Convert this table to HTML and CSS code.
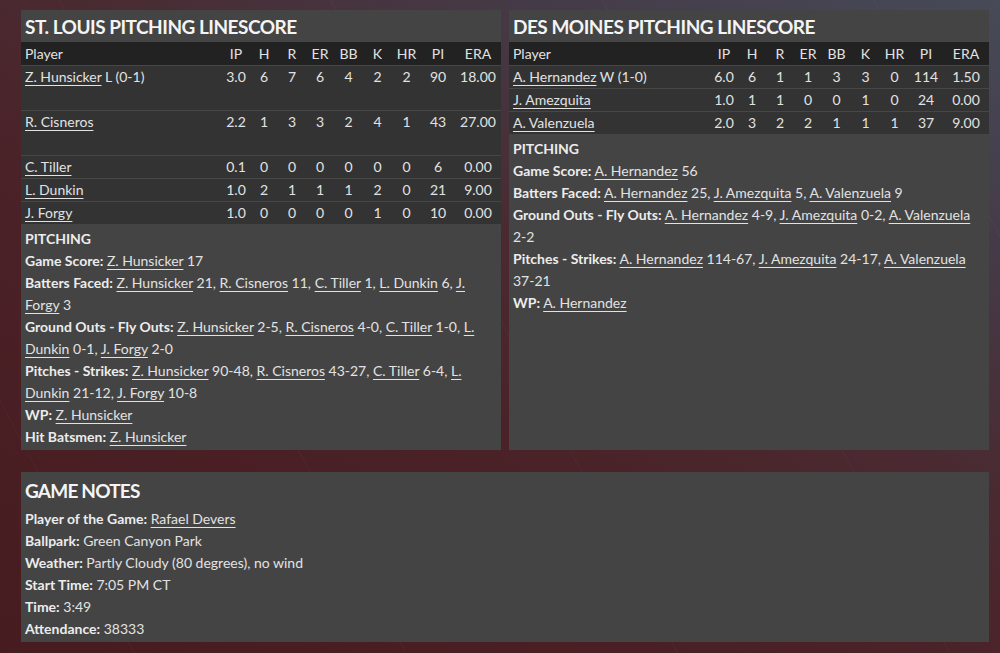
FILE: index.html
```html
<!DOCTYPE html>
<html>
<head>
<meta charset="utf-8">
<link rel="stylesheet" href="styles.css">
</head>
<body>
<div class="page">
  <div class="top">
    <section class="panel">
      <h2 class="panel-title">ST. LOUIS PITCHING LINESCORE</h2>
      <table class="line">
        <colgroup><col><col class="c-ip"><col class="c-n"><col class="c-n"><col class="c-n"><col class="c-n2"><col class="c-n2"><col class="c-n2"><col class="c-pi"><col class="c-era"></colgroup>
        <thead><tr><th class="name">Player</th><th>IP</th><th>H</th><th>R</th><th>ER</th><th>BB</th><th>K</th><th>HR</th><th>PI</th><th>ERA</th></tr></thead>
        <tbody>
          <tr class="tall"><td class="name"><a href="#">Z. Hunsicker</a> L (0-1)</td><td>3.0</td><td>6</td><td>7</td><td>6</td><td>4</td><td>2</td><td>2</td><td>90</td><td>18.00</td></tr>
          <tr class="tall"><td class="name"><a href="#">R. Cisneros</a></td><td>2.2</td><td>1</td><td>3</td><td>3</td><td>2</td><td>4</td><td>1</td><td>43</td><td>27.00</td></tr>
          <tr><td class="name"><a href="#">C. Tiller</a></td><td>0.1</td><td>0</td><td>0</td><td>0</td><td>0</td><td>0</td><td>0</td><td>6</td><td>0.00</td></tr>
          <tr><td class="name"><a href="#">L. Dunkin</a></td><td>1.0</td><td>2</td><td>1</td><td>1</td><td>1</td><td>2</td><td>0</td><td>21</td><td>9.00</td></tr>
          <tr><td class="name"><a href="#">J. Forgy</a></td><td>1.0</td><td>0</td><td>0</td><td>0</td><td>0</td><td>1</td><td>0</td><td>10</td><td>0.00</td></tr>
        </tbody>
      </table>
      <div class="notes">
        <p><b>PITCHING</b></p>
        <p><b>Game Score:</b> <a href="#">Z. Hunsicker</a> 17</p>
        <p><b>Batters Faced:</b> <a href="#">Z. Hunsicker</a> 21, <a href="#">R. Cisneros</a> 11, <a href="#">C. Tiller</a> 1, <a href="#">L. Dunkin</a> 6, <a href="#">J. Forgy</a> 3</p>
        <p><b>Ground Outs - Fly Outs:</b> <a href="#">Z. Hunsicker</a> 2-5, <a href="#">R. Cisneros</a> 4-0, <a href="#">C. Tiller</a> 1-0, <a href="#">L. Dunkin</a> 0-1, <a href="#">J. Forgy</a> 2-0</p>
        <p><b>Pitches - Strikes:</b> <a href="#">Z. Hunsicker</a> 90-48, <a href="#">R. Cisneros</a> 43-27, <a href="#">C. Tiller</a> 6-4, <a href="#">L. Dunkin</a> 21-12, <a href="#">J. Forgy</a> 10-8</p>
        <p><b>WP:</b> <a href="#">Z. Hunsicker</a></p>
        <p><b>Hit Batsmen:</b> <a href="#">Z. Hunsicker</a></p>
      </div>
    </section>
    <section class="panel">
      <h2 class="panel-title">DES MOINES PITCHING LINESCORE</h2>
      <table class="line">
        <colgroup><col><col class="c-ip"><col class="c-n"><col class="c-n"><col class="c-n"><col class="c-n2"><col class="c-n2"><col class="c-n2"><col class="c-pi"><col class="c-era"></colgroup>
        <thead><tr><th class="name">Player</th><th>IP</th><th>H</th><th>R</th><th>ER</th><th>BB</th><th>K</th><th>HR</th><th>PI</th><th>ERA</th></tr></thead>
        <tbody>
          <tr><td class="name"><a href="#">A. Hernandez</a> W (1-0)</td><td>6.0</td><td>6</td><td>1</td><td>1</td><td>3</td><td>3</td><td>0</td><td>114</td><td>1.50</td></tr>
          <tr><td class="name"><a href="#">J. Amezquita</a></td><td>1.0</td><td>1</td><td>1</td><td>0</td><td>0</td><td>1</td><td>0</td><td>24</td><td>0.00</td></tr>
          <tr><td class="name"><a href="#">A. Valenzuela</a></td><td>2.0</td><td>3</td><td>2</td><td>2</td><td>1</td><td>1</td><td>1</td><td>37</td><td>9.00</td></tr>
        </tbody>
      </table>
      <div class="notes">
        <p><b>PITCHING</b></p>
        <p><b>Game Score:</b> <a href="#">A. Hernandez</a> 56</p>
        <p><b>Batters Faced:</b> <a href="#">A. Hernandez</a> 25, <a href="#">J. Amezquita</a> 5, <a href="#">A. Valenzuela</a> 9</p>
        <p><b>Ground Outs - Fly Outs:</b> <a href="#">A. Hernandez</a> 4-9, <a href="#">J. Amezquita</a> 0-2, <a href="#">A. Valenzuela</a> 2-2</p>
        <p><b>Pitches - Strikes:</b> <a href="#">A. Hernandez</a> 114-67, <a href="#">J. Amezquita</a> 24-17, <a href="#">A. Valenzuela</a> 37-21</p>
        <p><b>WP:</b> <a href="#">A. Hernandez</a></p>
      </div>
    </section>
  </div>
  <section class="panel game-notes">
    <h2 class="panel-title">GAME NOTES</h2>
    <div class="notes">
      <p><b>Player of the Game:</b> <a href="#">Rafael Devers</a></p>
      <p><b>Ballpark:</b> Green Canyon Park</p>
      <p><b>Weather:</b> Partly Cloudy (80 degrees), no wind</p>
      <p><b>Start Time:</b> 7:05 PM CT</p>
      <p><b>Time:</b> 3:49</p>
      <p><b>Attendance:</b> 38333</p>
    </div>
  </section>
</div>
</body>
</html>
```

FILE: styles.css
```css
html, body {
  margin: 0;
  padding: 0;
}

body {
  width: 1000px;
  height: 653px;
  overflow: hidden;
  font-family: Lato, "Open Sans", sans-serif;
  font-size: 14px;
  color: #e2e2e2;
  background:
    repeating-linear-gradient(62deg, rgba(255,255,255,0) 0 118px, rgba(255,255,255,0.025) 118px 119px, rgba(255,255,255,0) 119px 240px),
    linear-gradient(208deg, #474a58 0%, #453a47 22%, #4a2a31 42%, #4a2127 62%, #471c20 100%);
}

.page {
  padding: 10px 11px 0 21px;
  display: flex;
  flex-direction: column;
  gap: 22px;
}

.top {
  display: flex;
  gap: 8px;
}

.panel {
  background: #444444;
  width: 480px;
}

.panel-title {
  margin: 0;
  height: 32px;
  line-height: 33px;
  padding-left: 4px;
  font-size: 19px;
  font-weight: 700;
  color: #f4f4f4;
  letter-spacing: -0.5px;
}

.line {
  width: 100%;
  border-collapse: separate;
  border-spacing: 0;
  table-layout: fixed;
}

.c-ip { width: 28px; }
.c-n { width: 28px; }
.c-n2 { width: 29px; }
.c-pi { width: 34px; }
.c-era { width: 46px; }

.line th {
  background: #222222;
  height: 23px;
  padding: 0;
  font-weight: 400;
  text-align: center;
  line-height: 23px;
  color: #e2e2e2;
}

.line td {
  background: #333333;
  border-top: 1px solid #474747;
  height: 22px;
  padding: 0;
  line-height: 22px;
  text-align: center;
  vertical-align: top;
  white-space: nowrap;
}

.line tr.tall td {
  height: 44px;
}

.line .name {
  text-align: left;
  padding-left: 4px;
}

a {
  color: inherit;
  text-decoration: underline;
  text-underline-offset: 3px;
  text-decoration-thickness: 1px;
}

.notes {
  padding: 4px 4px 2px 4px;
}

.notes p {
  margin: 0;
  line-height: 22px;
}

.notes b {
  font-weight: 700;
  color: #ececec;
}

.game-notes {
  width: 968px;
}

.game-notes .panel-title {
  height: 36px;
  line-height: 38px;
  font-size: 19px;
  letter-spacing: -0.8px;
}

.game-notes .notes {
  padding-top: 0;
}
```
